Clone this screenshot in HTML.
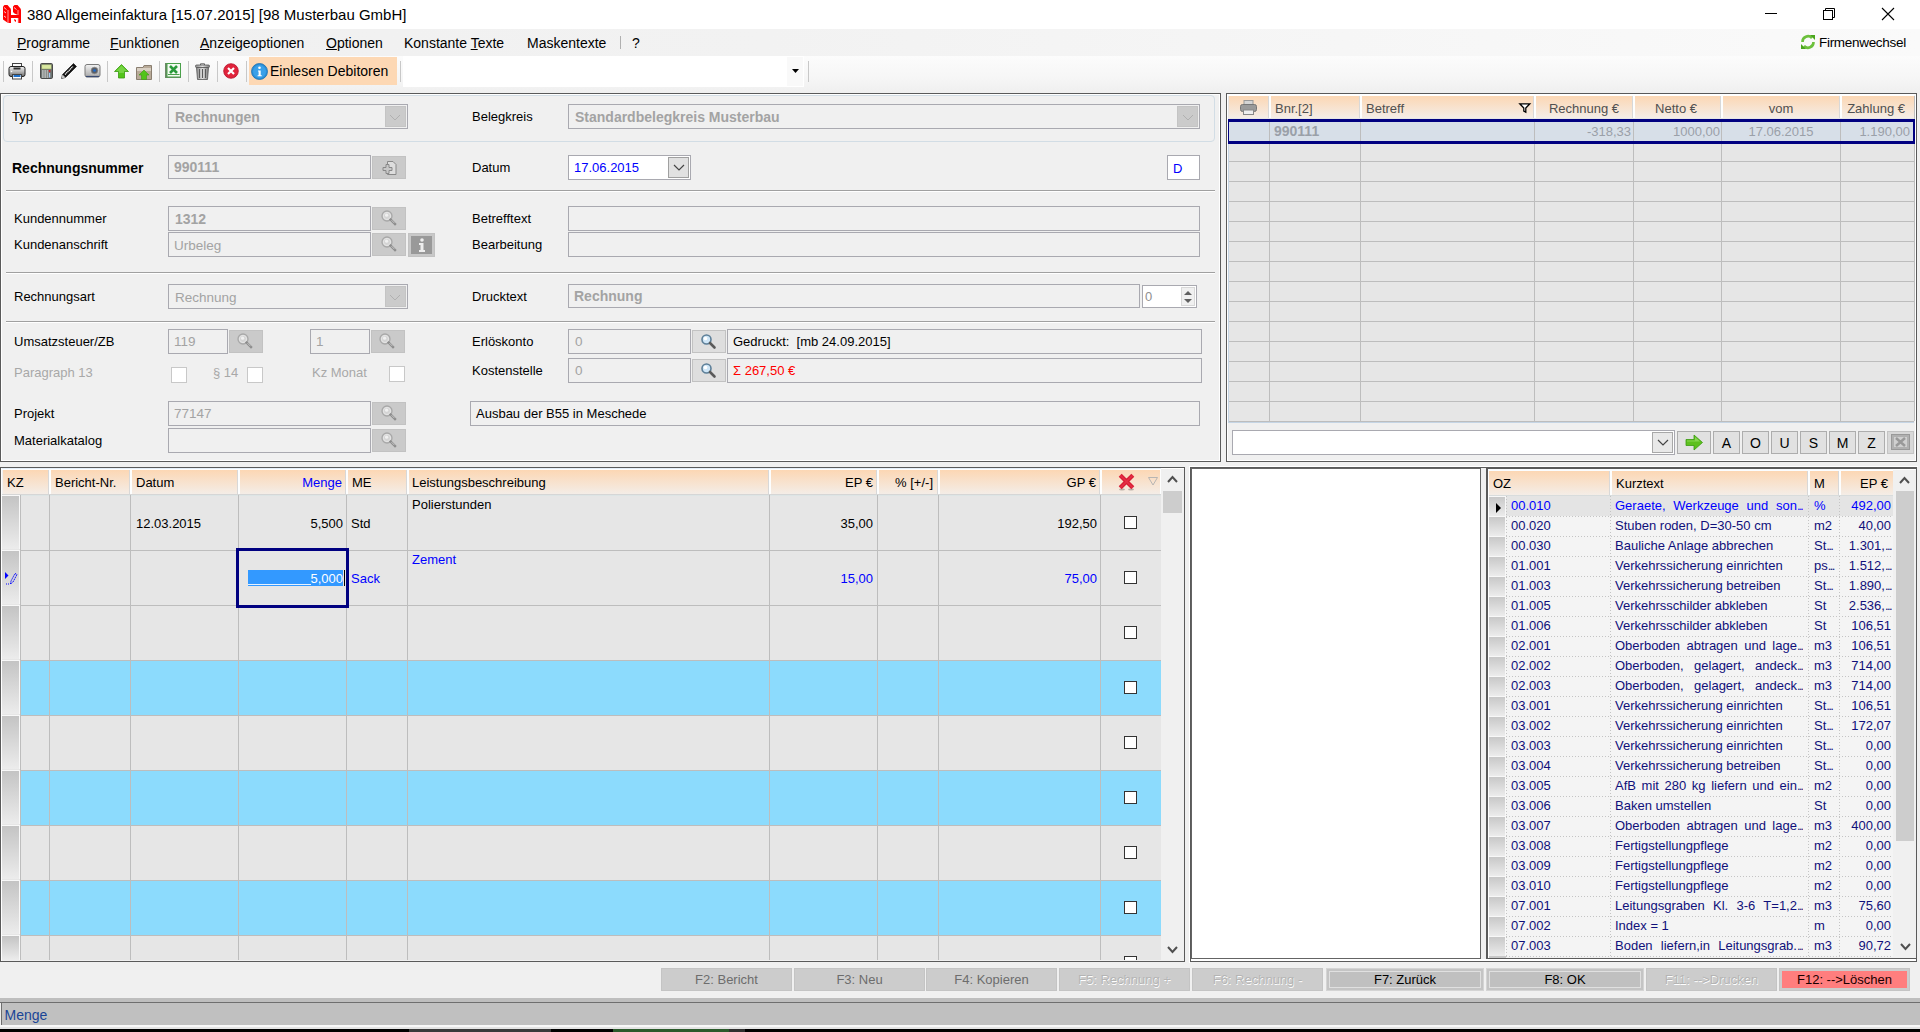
<!DOCTYPE html>
<html><head><meta charset="utf-8"><title>Allgemeinfaktura</title>
<style>
html,body{margin:0;padding:0;}
body{width:1920px;height:1032px;overflow:hidden;position:relative;background:#f0f0f0;font-family:"Liberation Sans", sans-serif;}
.a{position:absolute;}
.t{white-space:pre;}
svg{overflow:visible}
</style></head><body>
<div class="a" style="left:0px;top:0px;width:1920px;height:29px;background:#fff"></div>
<svg class="a" style="left:0px;top:0px;" width="24" height="24" viewBox="0 0 24 24"><path d="M3 6.5 L4.5 5 L7.5 5 L10.5 8.5 L11 10 L11 23 L8 23 L3 19.5 Z" fill="#ff0000"/><path d="M13 6.5 L14.5 5 L17.5 5 L20.5 8.5 L21 10 L21 23 L18 23 L18 15 L14.5 13.5 L13 12 Z" fill="#ff0000"/><rect x="11" y="15" width="7" height="3" fill="#ff0000"/><path d="M14 19 L16 20 L16 22 L14.5 21 Z" fill="#ff0000"/><path d="M4 7.5 L6.5 9.5 M4 11.5 L6 13 M4 16 L6 17.5 M14 7.5 L16.5 9.5" stroke="#ffd8d8" stroke-width="0.9"/><path d="M8 10 V23 M18 10 V15 M18 18 V23" stroke="#ffc0c0" stroke-width="0.8"/></svg>
<div class="a t" style="left:27px;top:6.0px;font-size:15px;line-height:18px;color:#000;font-weight:400;">380 Allgemeinfaktura [15.07.2015] [98 Musterbau GmbH]</div>
<div class="a" style="left:1765px;top:13px;width:12px;height:1px;background:#000"></div>
<svg class="a" style="left:1822px;top:7px;" width="14" height="14" viewBox="0 0 14 14"><rect x="1.5" y="3.5" width="9" height="9" fill="none" stroke="#000"/><path d="M3.5 3.5 V1.5 H12.5 V10.5 H10.5" fill="none" stroke="#000"/></svg>
<svg class="a" style="left:1881px;top:7px;" width="14" height="14" viewBox="0 0 14 14"><path d="M1 1 L13 13 M13 1 L1 13" stroke="#000" stroke-width="1.1"/></svg>
<div class="a" style="left:0px;top:29px;width:1920px;height:27px;background:linear-gradient(to right,#f0f0f0 0%,#f2f2f2 40%,#fafafa 100%)"></div>
<div class="a t" style="left:17px;top:34.5px;font-size:14px;line-height:17px;color:#000;font-weight:400;"><u>P</u>rogramme</div>
<div class="a t" style="left:110px;top:34.5px;font-size:14px;line-height:17px;color:#000;font-weight:400;"><u>F</u>unktionen</div>
<div class="a t" style="left:200px;top:34.5px;font-size:14px;line-height:17px;color:#000;font-weight:400;"><u>A</u>nzeigeoptionen</div>
<div class="a t" style="left:326px;top:34.5px;font-size:14px;line-height:17px;color:#000;font-weight:400;"><u>O</u>ptionen</div>
<div class="a t" style="left:404px;top:34.5px;font-size:14px;line-height:17px;color:#000;font-weight:400;">Konstante <u>T</u>exte</div>
<div class="a t" style="left:527px;top:34.5px;font-size:14px;line-height:17px;color:#000;font-weight:400;">Maskentexte</div>
<div class="a" style="left:620px;top:36px;width:1px;height:13px;background:#b0b0b0"></div>
<div class="a t" style="left:632px;top:34.5px;font-size:14px;line-height:17px;color:#000;font-weight:400;">?</div>
<svg class="a" style="left:1800px;top:34px;" width="16" height="16" viewBox="0 0 16 16"><path d="M2.5 8 A5.5 5.5 0 0 1 12 4" fill="none" stroke="#6cc03c" stroke-width="2.6"/><path d="M10 1 L15 1 L15 6 Z" fill="#4aa51c"/><path d="M13.5 8 A5.5 5.5 0 0 1 4 12" fill="none" stroke="#6cc03c" stroke-width="2.6"/><path d="M6 15 L1 15 L1 10 Z" fill="#4aa51c"/></svg>
<div class="a t" style="left:1819px;top:35.0px;font-size:13.5px;line-height:16.5px;color:#000;font-weight:400;letter-spacing:-0.3px">Firmenwechsel</div>
<div class="a" style="left:0px;top:56px;width:1920px;height:37px;background:linear-gradient(to bottom,#fcfcfc 0%,#f6f6f6 60%,#efefef 100%)"></div>
<div class="a" style="left:3px;top:61px;width:1px;height:21px;background:#c8c8c8"></div>
<div class="a" style="left:32px;top:61px;width:1px;height:21px;background:#c8c8c8"></div>
<div class="a" style="left:107px;top:61px;width:1px;height:21px;background:#c8c8c8"></div>
<div class="a" style="left:159px;top:61px;width:1px;height:21px;background:#c8c8c8"></div>
<div class="a" style="left:188px;top:61px;width:1px;height:21px;background:#c8c8c8"></div>
<div class="a" style="left:217px;top:61px;width:1px;height:21px;background:#c8c8c8"></div>
<div class="a" style="left:246px;top:61px;width:1px;height:21px;background:#c8c8c8"></div>
<div class="a" style="left:400px;top:61px;width:1px;height:21px;background:#c8c8c8"></div>
<div class="a" style="left:808px;top:61px;width:1px;height:21px;background:#c8c8c8"></div>
<svg class="a" style="left:8px;top:62px;" width="18" height="18" viewBox="0 0 18 18"><defs><linearGradient id="pg" x1="0" y1="0" x2="0" y2="1"><stop offset="0" stop-color="#f2f2f2"/><stop offset="0.5" stop-color="#b8b8b8"/><stop offset="1" stop-color="#6a6a6a"/></linearGradient></defs><rect x="4.5" y="1.5" width="9" height="5" fill="#fafafa" stroke="#444"/><rect x="1" y="4.5" width="16" height="10" rx="2" fill="url(#pg)" stroke="#222" stroke-width="1"/><rect x="5.5" y="5.5" width="7" height="2" fill="#333"/><circle cx="3.5" cy="9.5" r="0.8" fill="#fff"/><rect x="4.5" y="12.5" width="9" height="4.5" fill="#fff" stroke="#444"/><rect x="5.5" y="13" width="7" height="2" fill="#1e6fc8"/></svg>
<svg class="a" style="left:40px;top:63px;" width="13" height="16" viewBox="0 0 13 16"><rect x="0.5" y="0.5" width="12" height="15" rx="1.2" fill="#6e7370" stroke="#4a4a4a"/><rect x="1.8" y="1.8" width="9.4" height="4.2" fill="#d9e8a0" stroke="#8a9a60" stroke-width="0.5"/><rect x="2" y="7.5" width="1.7" height="1" fill="#f4f4f4"/><rect x="4.3" y="7.5" width="1.7" height="1" fill="#f4f4f4"/><rect x="6.6" y="7.5" width="1.7" height="1" fill="#f4f4f4"/><rect x="2" y="9.5" width="1.7" height="1" fill="#f4f4f4"/><rect x="4.3" y="9.5" width="1.7" height="1" fill="#f4f4f4"/><rect x="6.6" y="9.5" width="1.7" height="1" fill="#f4f4f4"/><rect x="2" y="11.5" width="1.7" height="1" fill="#f4f4f4"/><rect x="4.3" y="11.5" width="1.7" height="1" fill="#f4f4f4"/><rect x="6.6" y="11.5" width="1.7" height="1" fill="#f4f4f4"/><rect x="2" y="13.5" width="1.7" height="1" fill="#f4f4f4"/><rect x="4.3" y="13.5" width="1.7" height="1" fill="#f4f4f4"/><rect x="6.6" y="13.5" width="1.7" height="1" fill="#f4f4f4"/><circle cx="9.6" cy="7.9" r="0.9" fill="#e81818"/><path d="M9.6 10 V14.5" stroke="#a8c8f0" stroke-width="1.2"/></svg>
<svg class="a" style="left:60px;top:62px;" width="18" height="18" viewBox="0 0 18 18"><path d="M1.5 16.5 L2.5 12.5 L13.5 1.5 L16.5 4.5 L5.5 15.5 Z" fill="#111" stroke="#111" stroke-width="0.6"/><path d="M1.5 16.5 L2.5 12.5 L5.5 15.5 Z" fill="#c8c8c8"/><path d="M5 12.5 L13 4.5" stroke="#fff" stroke-width="1.3" stroke-dasharray="1.2 0.6"/></svg>
<svg class="a" style="left:84px;top:64px;" width="17" height="14" viewBox="0 0 17 14"><defs><linearGradient id="cg" x1="0" y1="0" x2="0" y2="1"><stop offset="0" stop-color="#f4f4f4"/><stop offset="1" stop-color="#a8a8a8"/></linearGradient></defs><path d="M1 2.5 Q1 0.5 3 0.5 H14 Q16 0.5 16 2.5 V11 Q16 13 14 13 H3 Q1 13 1 11 Z" fill="url(#cg)" stroke="#7a7a7a"/><path d="M2 12.5 H15" stroke="#3a4a70" stroke-width="1.2"/><circle cx="10.5" cy="6.5" r="3.3" fill="#5a5e66" stroke="#888" stroke-width="0.6"/><circle cx="10.5" cy="6.5" r="1.3" fill="#1a6ad0"/></svg>
<svg class="a" style="left:114px;top:64px;" width="15" height="15" viewBox="0 0 15 15"><path d="M7.5 0.5 L14.5 7.5 L10.5 7.5 L10.5 14 L4.5 14 L4.5 7.5 L0.5 7.5 Z" fill="#52c41a" stroke="#3a9a10" stroke-width="0.8"/><path d="M7.5 1.5 L13 7 L10 7 L10 9 L5 9 L5 7 L2 7 Z" fill="#8fe060" opacity="0.6"/></svg>
<svg class="a" style="left:136px;top:64px;" width="17" height="16" viewBox="0 0 17 16"><path d="M0.5 3.5 H7 L8 1.5 H15.5 V15.5 H0.5 Z" fill="#b8aa98" stroke="#8a7e70"/><rect x="1" y="4" width="14" height="3" fill="#d8cfc2"/><path d="M8 6 L13 11 L10.5 11 L10.5 15.5 L5.5 15.5 L5.5 11 L3 11 Z" fill="#52c41a" stroke="#3a9a10" stroke-width="0.6"/></svg>
<svg class="a" style="left:165px;top:63px;" width="17" height="16" viewBox="0 0 17 16"><rect x="0" y="0" width="16" height="15" fill="#6a8a66"/><rect x="2" y="0.5" width="13.5" height="13.5" fill="#f4faf2" stroke="#4aa04a" stroke-width="1"/><path d="M5 3 L12 10 M12 3 L5 10" stroke="#2a9a3a" stroke-width="2.6"/><path d="M3 11.5 H14.5" stroke="#4aa04a" stroke-width="1"/></svg>
<svg class="a" style="left:195px;top:63px;" width="15" height="17" viewBox="0 0 15 17"><defs><linearGradient id="tg" x1="0" y1="0" x2="1" y2="0"><stop offset="0" stop-color="#8a8a8a"/><stop offset="0.5" stop-color="#e0e0e0"/><stop offset="1" stop-color="#7a7a7a"/></linearGradient></defs><rect x="0.5" y="2" width="14" height="2.5" rx="1" fill="url(#tg)" stroke="#555" stroke-width="0.8"/><path d="M5.5 2 V0.8 H9.5 V2" fill="none" stroke="#555" stroke-width="0.9"/><path d="M1.5 4.5 H13.5 L12.5 16.5 H2.5 Z" fill="url(#tg)" stroke="#555" stroke-width="0.8"/><path d="M4.5 6 V15 M7.5 6 V15 M10.5 6 V15" stroke="#5a5a5a" stroke-width="1"/></svg>
<svg class="a" style="left:223px;top:63px;" width="16" height="16" viewBox="0 0 16 16"><circle cx="8" cy="8" r="7.3" fill="#e0243c" stroke="#b8102a" stroke-width="0.8"/><path d="M5 5 L11 11 M11 5 L5 11" stroke="#fff" stroke-width="2.2"/></svg>
<div class="a" style="left:249px;top:57px;width:148px;height:28px;background:#fdd8b4"></div>
<svg class="a" style="left:251px;top:63px;" width="17" height="17" viewBox="0 0 17 17"><circle cx="8.5" cy="8.5" r="8" fill="#2a8fd8" stroke="#1a6fb0" stroke-width="0.8"/><circle cx="8.5" cy="8.5" r="6.5" fill="#3aa0e8"/><circle cx="8.5" cy="4.8" r="1.3" fill="#fff"/><path d="M7 7.5 H9.7 V12.3 H10.8 V13.3 H6.6 V12.3 H7.6 V8.5 H7 Z" fill="#fff"/></svg>
<div class="a t" style="left:270px;top:62.5px;font-size:14px;line-height:17px;color:#000;font-weight:400;">Einlesen Debitoren</div>
<div class="a" style="left:403px;top:56px;width:401px;height:31px;background:#fff"></div>
<div class="a" style="left:787px;top:57px;width:16px;height:29px;background:#f9f9f9"></div>
<svg class="a" style="left:792px;top:69px;" width="7" height="5" viewBox="0 0 7 5"><path d="M0 0 H7 L3.5 4 Z" fill="#000"/></svg>
<div class="a" style="left:0px;top:93px;width:1221px;height:369px;background:#f0f0f0;border-top:1px solid #5a5a5a;border-left:1px solid #5a5a5a;border-right:1px solid #5a5a5a;border-bottom:1px solid #5a5a5a;box-sizing:border-box;box-shadow:inset 1px 1px 0 #fff, inset -1px -1px 0 #fff"></div>
<div class="a" style="left:3px;top:95px;width:1212px;height:47px;border:1px solid #d2dde5;border-radius:4px;box-sizing:border-box"></div>
<div class="a t" style="left:12px;top:108.5px;font-size:13px;line-height:16px;color:#000;font-weight:400;">Typ</div>
<div class="a" style="left:168px;top:104px;width:240px;height:25px;background:#f0f0f0;border:1px solid #a9a9b0;box-sizing:border-box"></div>
<div class="a" style="left:385px;top:106px;width:21px;height:21px;background:#cbcbcb;border:1px solid #c4c4c4;box-sizing:border-box"></div>
<svg class="a" style="left:389px;top:114px;" width="12" height="7" viewBox="0 0 12 7"><path d="M1 1 L6.0 6 L11 1" fill="none" stroke="#b0b0b0" stroke-width="1"/></svg>
<div class="a t" style="left:175px;top:108.5px;font-size:14px;line-height:17px;color:#a3a3a3;font-weight:700;">Rechnungen</div>
<div class="a t" style="left:472px;top:108.5px;font-size:13px;line-height:16px;color:#000;font-weight:400;">Belegkreis</div>
<div class="a" style="left:568px;top:104px;width:632px;height:25px;background:#f0f0f0;border:1px solid #a9a9b0;box-sizing:border-box"></div>
<div class="a" style="left:1177px;top:106px;width:21px;height:21px;background:#cbcbcb;border:1px solid #c4c4c4;box-sizing:border-box"></div>
<svg class="a" style="left:1181.5px;top:114px;" width="12" height="7" viewBox="0 0 12 7"><path d="M1 1 L6.0 6 L11 1" fill="none" stroke="#b0b0b0" stroke-width="1"/></svg>
<div class="a t" style="left:575px;top:108.5px;font-size:14px;line-height:17px;color:#a3a3a3;font-weight:700;">Standardbelegkreis Musterbau</div>
<div class="a t" style="left:12px;top:159.5px;font-size:14px;line-height:17px;color:#000;font-weight:700;">Rechnungsnummer</div>
<div class="a" style="left:168px;top:155px;width:203px;height:24px;background:#f0f0f0;border:1px solid #a9a9b0;box-sizing:border-box"></div>
<div class="a t" style="left:174px;top:158.5px;font-size:14px;line-height:17px;color:#a3a3a3;font-weight:700;">990111</div>
<div class="a" style="left:372px;top:156px;width:34px;height:23px;background:#cacaca;border:1px solid #c2c2c2;box-sizing:border-box"></div>
<svg class="a" style="left:381px;top:159px;" width="17" height="17" viewBox="0 0 17 17"><path d="M6.5 2.5 H12 L15 5.5 V15.5 H6.5 Z" fill="#ddd" stroke="#888"/><path d="M2 8.5 H5 V5.5 H8 V8.5 H11 V11.5 H8 V14.5 H5 V11.5 H2 Z" fill="#c8c8c8" stroke="#888"/></svg>
<div class="a t" style="left:472px;top:159.5px;font-size:13px;line-height:16px;color:#000;font-weight:400;">Datum</div>
<div class="a" style="left:568px;top:155px;width:123px;height:25px;background:#fff;border:1px solid #a9a9b0;box-sizing:border-box"></div>
<div class="a" style="left:668px;top:157px;width:21px;height:21px;background:#e1e1e1;border:1px solid #a0a0a0;box-sizing:border-box"></div>
<svg class="a" style="left:673px;top:164px;" width="12" height="7" viewBox="0 0 12 7"><path d="M1 1 L6.0 6 L11 1" fill="none" stroke="#444" stroke-width="1.2"/></svg>
<div class="a t" style="left:574px;top:159.5px;font-size:13px;line-height:16px;color:#0000ff;font-weight:400;">17.06.2015</div>
<div class="a" style="left:1167px;top:155px;width:33px;height:25px;background:#fff;border:1px solid #a9a9b0;box-sizing:border-box"></div>
<div class="a t" style="left:1173px;top:160.5px;font-size:13px;line-height:16px;color:#0000ff;font-weight:400;">D</div>
<div class="a" style="left:6px;top:190px;width:1209px;height:1px;background:#a0a0a0"></div>
<div class="a" style="left:6px;top:191px;width:1209px;height:1px;background:#ffffff"></div>
<div class="a t" style="left:14px;top:210.5px;font-size:13px;line-height:16px;color:#000;font-weight:400;">Kundennummer</div>
<div class="a t" style="left:14px;top:236.5px;font-size:13px;line-height:16px;color:#000;font-weight:400;">Kundenanschrift</div>
<div class="a" style="left:168px;top:206px;width:203px;height:25px;background:#f0f0f0;border:1px solid #a9a9b0;box-sizing:border-box"></div>
<div class="a" style="left:168px;top:232px;width:203px;height:25px;background:#f0f0f0;border:1px solid #a9a9b0;box-sizing:border-box"></div>
<div class="a t" style="left:175px;top:210.5px;font-size:14px;line-height:17px;color:#a3a3a3;font-weight:700;">1312</div>
<div class="a t" style="left:174px;top:237.5px;font-size:13.5px;line-height:16.5px;color:#a3a3a3;font-weight:400;">Urbeleg</div>
<div class="a" style="left:372px;top:207px;width:34px;height:23px;background:#cacaca;border:1px solid #c2c2c2;box-sizing:border-box"></div>
<div class="a" style="left:372px;top:233px;width:34px;height:23px;background:#cacaca;border:1px solid #c2c2c2;box-sizing:border-box"></div>
<svg class="a" style="left:381px;top:210px;" width="16" height="16" viewBox="0 0 16 16"><circle cx="6" cy="6" r="5" fill="#d4d4d4" stroke="#a8a8a8" stroke-width="1.3"/><circle cx="6" cy="6" r="3.6" fill="none" stroke="#e8e8e8" stroke-width="0.8"/><circle cx="5.6" cy="5.2" r="1.6" fill="#f0f0f0"/><path d="M9.6 9.6 L14 14" stroke="#8c8c8c" stroke-width="2.4" stroke-linecap="square"/><path d="M10.5 10.2 L13.5 13.2" stroke="#e0e0e0" stroke-width="0.7"/></svg>
<svg class="a" style="left:381px;top:236px;" width="16" height="16" viewBox="0 0 16 16"><circle cx="6" cy="6" r="5" fill="#d4d4d4" stroke="#a8a8a8" stroke-width="1.3"/><circle cx="6" cy="6" r="3.6" fill="none" stroke="#e8e8e8" stroke-width="0.8"/><circle cx="5.6" cy="5.2" r="1.6" fill="#f0f0f0"/><path d="M9.6 9.6 L14 14" stroke="#8c8c8c" stroke-width="2.4" stroke-linecap="square"/><path d="M10.5 10.2 L13.5 13.2" stroke="#e0e0e0" stroke-width="0.7"/></svg>
<div class="a" style="left:408px;top:233px;width:27px;height:24px;background:#c8c8c8;border:1px solid #c2c2c2;box-sizing:border-box"></div>
<svg class="a" style="left:411px;top:236px;" width="21" height="18" viewBox="0 0 21 18"><rect x="0" y="0" width="21" height="18" fill="#999"/><circle cx="11" cy="4" r="1.8" fill="#eee"/><path d="M8 7 H12.5 V14 H14 V16 H8 V14 H9.5 V9 H8 Z" fill="#eee"/></svg>
<div class="a t" style="left:472px;top:210.5px;font-size:13px;line-height:16px;color:#000;font-weight:400;">Betrefftext</div>
<div class="a t" style="left:472px;top:236.5px;font-size:13px;line-height:16px;color:#000;font-weight:400;">Bearbeitung</div>
<div class="a" style="left:568px;top:206px;width:632px;height:25px;background:#f0f0f0;border:1px solid #a9a9b0;box-sizing:border-box"></div>
<div class="a" style="left:568px;top:232px;width:632px;height:25px;background:#f0f0f0;border:1px solid #a9a9b0;box-sizing:border-box"></div>
<div class="a" style="left:6px;top:272px;width:1209px;height:1px;background:#a0a0a0"></div>
<div class="a" style="left:6px;top:273px;width:1209px;height:1px;background:#ffffff"></div>
<div class="a t" style="left:14px;top:288.5px;font-size:13px;line-height:16px;color:#000;font-weight:400;">Rechnungsart</div>
<div class="a" style="left:168px;top:284px;width:240px;height:25px;background:#f0f0f0;border:1px solid #a9a9b0;box-sizing:border-box"></div>
<div class="a" style="left:385px;top:286px;width:21px;height:21px;background:#cbcbcb;border:1px solid #c4c4c4;box-sizing:border-box"></div>
<svg class="a" style="left:389px;top:294px;" width="12" height="7" viewBox="0 0 12 7"><path d="M1 1 L6.0 6 L11 1" fill="none" stroke="#b0b0b0" stroke-width="1"/></svg>
<div class="a t" style="left:175px;top:290.0px;font-size:13.5px;line-height:16.5px;color:#a3a3a3;font-weight:400;">Rechnung</div>
<div class="a t" style="left:472px;top:288.5px;font-size:13px;line-height:16px;color:#000;font-weight:400;">Drucktext</div>
<div class="a" style="left:568px;top:284px;width:572px;height:24px;background:#f0f0f0;border:1px solid #a9a9b0;box-sizing:border-box"></div>
<div class="a t" style="left:574px;top:287.5px;font-size:14px;line-height:17px;color:#a3a3a3;font-weight:700;">Rechnung</div>
<div class="a" style="left:1142px;top:285px;width:55px;height:23px;background:#fff;border:1px solid #a9a9b0;box-sizing:border-box"></div>
<div class="a t" style="left:1145px;top:288.5px;font-size:13px;line-height:16px;color:#909090;font-weight:400;">0</div>
<div class="a" style="left:1181px;top:287px;width:14px;height:19px;background:#f0f0f0;border:1px solid #d8d8d8;box-sizing:border-box"></div>
<svg class="a" style="left:1183px;top:289px;" width="10" height="16" viewBox="0 0 10 16"><path d="M1 6 L5 2 L9 6 Z" fill="#606060"/><path d="M1 10 L5 14 L9 10 Z" fill="#606060"/></svg>
<div class="a" style="left:6px;top:321px;width:1209px;height:1px;background:#a0a0a0"></div>
<div class="a" style="left:6px;top:322px;width:1209px;height:1px;background:#ffffff"></div>
<div class="a t" style="left:14px;top:333.5px;font-size:13px;line-height:16px;color:#000;font-weight:400;">Umsatzsteuer/ZB</div>
<div class="a" style="left:168px;top:329px;width:60px;height:25px;background:#f0f0f0;border:1px solid #a9a9b0;box-sizing:border-box"></div>
<div class="a t" style="left:174px;top:334.0px;font-size:13.5px;line-height:16.5px;color:#a3a3a3;font-weight:400;">119</div>
<div class="a" style="left:229px;top:330px;width:34px;height:23px;background:#cacaca;border:1px solid #c2c2c2;box-sizing:border-box"></div>
<svg class="a" style="left:237px;top:333px;" width="16" height="16" viewBox="0 0 16 16"><circle cx="6" cy="6" r="5" fill="#d4d4d4" stroke="#a8a8a8" stroke-width="1.3"/><circle cx="6" cy="6" r="3.6" fill="none" stroke="#e8e8e8" stroke-width="0.8"/><circle cx="5.6" cy="5.2" r="1.6" fill="#f0f0f0"/><path d="M9.6 9.6 L14 14" stroke="#8c8c8c" stroke-width="2.4" stroke-linecap="square"/><path d="M10.5 10.2 L13.5 13.2" stroke="#e0e0e0" stroke-width="0.7"/></svg>
<div class="a" style="left:310px;top:329px;width:60px;height:25px;background:#f0f0f0;border:1px solid #a9a9b0;box-sizing:border-box"></div>
<div class="a t" style="left:316px;top:334.0px;font-size:13.5px;line-height:16.5px;color:#a3a3a3;font-weight:400;">1</div>
<div class="a" style="left:371px;top:330px;width:34px;height:23px;background:#cacaca;border:1px solid #c2c2c2;box-sizing:border-box"></div>
<svg class="a" style="left:379px;top:333px;" width="16" height="16" viewBox="0 0 16 16"><circle cx="6" cy="6" r="5" fill="#d4d4d4" stroke="#a8a8a8" stroke-width="1.3"/><circle cx="6" cy="6" r="3.6" fill="none" stroke="#e8e8e8" stroke-width="0.8"/><circle cx="5.6" cy="5.2" r="1.6" fill="#f0f0f0"/><path d="M9.6 9.6 L14 14" stroke="#8c8c8c" stroke-width="2.4" stroke-linecap="square"/><path d="M10.5 10.2 L13.5 13.2" stroke="#e0e0e0" stroke-width="0.7"/></svg>
<div class="a t" style="left:14px;top:364.5px;font-size:13px;line-height:16px;color:#a8a8a8;font-weight:400;">Paragraph 13</div>
<div class="a" style="left:171px;top:367px;width:16px;height:16px;background:#fff;border:1px solid #c8c8c8;box-sizing:border-box"></div>
<div class="a t" style="left:213px;top:364.5px;font-size:13px;line-height:16px;color:#a8a8a8;font-weight:400;">§ 14</div>
<div class="a" style="left:247px;top:367px;width:16px;height:16px;background:#fff;border:1px solid #c8c8c8;box-sizing:border-box"></div>
<div class="a t" style="left:312px;top:364.5px;font-size:13px;line-height:16px;color:#a8a8a8;font-weight:400;">Kz Monat</div>
<div class="a" style="left:389px;top:366px;width:16px;height:16px;background:#fff;border:1px solid #c8c8c8;box-sizing:border-box"></div>
<div class="a t" style="left:472px;top:333.5px;font-size:13px;line-height:16px;color:#000;font-weight:400;">Erlöskonto</div>
<div class="a t" style="left:472px;top:362.5px;font-size:13px;line-height:16px;color:#000;font-weight:400;">Kostenstelle</div>
<div class="a" style="left:568px;top:329px;width:123px;height:25px;background:#f0f0f0;border:1px solid #a9a9b0;box-sizing:border-box"></div>
<div class="a" style="left:568px;top:358px;width:123px;height:25px;background:#f0f0f0;border:1px solid #a9a9b0;box-sizing:border-box"></div>
<div class="a t" style="left:575px;top:334.0px;font-size:13.5px;line-height:16.5px;color:#a3a3a3;font-weight:400;">0</div>
<div class="a t" style="left:575px;top:363.0px;font-size:13.5px;line-height:16.5px;color:#a3a3a3;font-weight:400;">0</div>
<div class="a" style="left:692px;top:330px;width:34px;height:23px;background:#dedede;border:1px solid #c2c2c2;box-sizing:border-box"></div>
<div class="a" style="left:692px;top:359px;width:34px;height:23px;background:#dedede;border:1px solid #c2c2c2;box-sizing:border-box"></div>
<svg class="a" style="left:700px;top:333px;" width="16" height="16" viewBox="0 0 16 16"><circle cx="6.5" cy="6.5" r="4.5" fill="#cfe6f7" stroke="#5d7f98" stroke-width="1.6"/><circle cx="5.5" cy="5.5" r="1.8" fill="#ffffff"/><path d="M10 10 L14.5 14.5" stroke="#5a5a5a" stroke-width="2.6" stroke-linecap="round"/></svg>
<svg class="a" style="left:700px;top:362px;" width="16" height="16" viewBox="0 0 16 16"><circle cx="6.5" cy="6.5" r="4.5" fill="#cfe6f7" stroke="#5d7f98" stroke-width="1.6"/><circle cx="5.5" cy="5.5" r="1.8" fill="#ffffff"/><path d="M10 10 L14.5 14.5" stroke="#5a5a5a" stroke-width="2.6" stroke-linecap="round"/></svg>
<div class="a" style="left:727px;top:329px;width:475px;height:25px;background:#f0f0f0;border:1px solid #a9a9b0;box-sizing:border-box"></div>
<div class="a" style="left:727px;top:358px;width:475px;height:25px;background:#f0f0f0;border:1px solid #a9a9b0;box-sizing:border-box"></div>
<div class="a t" style="left:733px;top:333.5px;font-size:13px;line-height:16px;color:#000;font-weight:400;">Gedruckt:&nbsp; [mb 24.09.2015]</div>
<div class="a t" style="left:733px;top:362.5px;font-size:13px;line-height:16px;color:#ff0000;font-weight:400;">Σ 267,50 €</div>
<div class="a t" style="left:14px;top:405.5px;font-size:13px;line-height:16px;color:#000;font-weight:400;">Projekt</div>
<div class="a t" style="left:14px;top:432.5px;font-size:13px;line-height:16px;color:#000;font-weight:400;">Materialkatalog</div>
<div class="a" style="left:168px;top:401px;width:203px;height:25px;background:#f0f0f0;border:1px solid #a9a9b0;box-sizing:border-box"></div>
<div class="a" style="left:168px;top:428px;width:203px;height:25px;background:#f0f0f0;border:1px solid #a9a9b0;box-sizing:border-box"></div>
<div class="a t" style="left:174px;top:406.0px;font-size:13.5px;line-height:16.5px;color:#a3a3a3;font-weight:400;">77147</div>
<div class="a" style="left:372px;top:402px;width:34px;height:23px;background:#cacaca;border:1px solid #c2c2c2;box-sizing:border-box"></div>
<div class="a" style="left:372px;top:429px;width:34px;height:23px;background:#cacaca;border:1px solid #c2c2c2;box-sizing:border-box"></div>
<svg class="a" style="left:381px;top:405px;" width="16" height="16" viewBox="0 0 16 16"><circle cx="6" cy="6" r="5" fill="#d4d4d4" stroke="#a8a8a8" stroke-width="1.3"/><circle cx="6" cy="6" r="3.6" fill="none" stroke="#e8e8e8" stroke-width="0.8"/><circle cx="5.6" cy="5.2" r="1.6" fill="#f0f0f0"/><path d="M9.6 9.6 L14 14" stroke="#8c8c8c" stroke-width="2.4" stroke-linecap="square"/><path d="M10.5 10.2 L13.5 13.2" stroke="#e0e0e0" stroke-width="0.7"/></svg>
<svg class="a" style="left:381px;top:432px;" width="16" height="16" viewBox="0 0 16 16"><circle cx="6" cy="6" r="5" fill="#d4d4d4" stroke="#a8a8a8" stroke-width="1.3"/><circle cx="6" cy="6" r="3.6" fill="none" stroke="#e8e8e8" stroke-width="0.8"/><circle cx="5.6" cy="5.2" r="1.6" fill="#f0f0f0"/><path d="M9.6 9.6 L14 14" stroke="#8c8c8c" stroke-width="2.4" stroke-linecap="square"/><path d="M10.5 10.2 L13.5 13.2" stroke="#e0e0e0" stroke-width="0.7"/></svg>
<div class="a" style="left:470px;top:401px;width:730px;height:25px;background:#f0f0f0;border:1px solid #a9a9b0;box-sizing:border-box"></div>
<div class="a t" style="left:476px;top:405.5px;font-size:13px;line-height:16px;color:#000;font-weight:400;">Ausbau der B55 in Meschede</div>
<div class="a" style="left:1226px;top:93px;width:691px;height:369px;background:#f0f0f0;border:1px solid #5a5a5a;box-sizing:border-box;box-shadow:inset 1px 1px 0 #fff, inset -1px -1px 0 #fff"></div>
<div class="a" style="left:1228px;top:95px;width:686px;height:327px;background:#e6e6e6"></div>
<div class="a" style="left:1228px;top:95px;width:686px;height:1px;background:#fff"></div>
<div class="a" style="left:1229px;top:96px;width:39px;height:22px;background:linear-gradient(to bottom,#fcd7b4,#f4ede7)"></div>
<div class="a" style="left:1268px;top:96px;width:1px;height:22px;background:#d8d8d8"></div>
<div class="a" style="left:1269px;top:96px;width:2px;height:22px;background:#fdfefe"></div>
<div class="a" style="left:1271px;top:96px;width:88px;height:22px;background:linear-gradient(to bottom,#fcd7b4,#f4ede7)"></div>
<div class="a" style="left:1359px;top:96px;width:1px;height:22px;background:#d8d8d8"></div>
<div class="a" style="left:1360px;top:96px;width:2px;height:22px;background:#fdfefe"></div>
<div class="a" style="left:1362px;top:96px;width:171px;height:22px;background:linear-gradient(to bottom,#fcd7b4,#f4ede7)"></div>
<div class="a" style="left:1533px;top:96px;width:1px;height:22px;background:#d8d8d8"></div>
<div class="a" style="left:1534px;top:96px;width:2px;height:22px;background:#fdfefe"></div>
<div class="a" style="left:1536px;top:96px;width:96px;height:22px;background:linear-gradient(to bottom,#fcd7b4,#f4ede7)"></div>
<div class="a" style="left:1632px;top:96px;width:1px;height:22px;background:#d8d8d8"></div>
<div class="a" style="left:1633px;top:96px;width:2px;height:22px;background:#fdfefe"></div>
<div class="a" style="left:1635px;top:96px;width:85px;height:22px;background:linear-gradient(to bottom,#fcd7b4,#f4ede7)"></div>
<div class="a" style="left:1720px;top:96px;width:1px;height:22px;background:#d8d8d8"></div>
<div class="a" style="left:1721px;top:96px;width:2px;height:22px;background:#fdfefe"></div>
<div class="a" style="left:1723px;top:96px;width:116px;height:22px;background:linear-gradient(to bottom,#fcd7b4,#f4ede7)"></div>
<div class="a" style="left:1839px;top:96px;width:1px;height:22px;background:#d8d8d8"></div>
<div class="a" style="left:1840px;top:96px;width:2px;height:22px;background:#fdfefe"></div>
<div class="a" style="left:1842px;top:96px;width:72px;height:22px;background:linear-gradient(to bottom,#fcd7b4,#f4ede7)"></div>
<div class="a" style="left:1228px;top:141px;width:686px;height:1px;background:#bdbdbd"></div>
<div class="a" style="left:1228px;top:161px;width:686px;height:1px;background:#bdbdbd"></div>
<div class="a" style="left:1228px;top:181px;width:686px;height:1px;background:#bdbdbd"></div>
<div class="a" style="left:1228px;top:201px;width:686px;height:1px;background:#bdbdbd"></div>
<div class="a" style="left:1228px;top:221px;width:686px;height:1px;background:#bdbdbd"></div>
<div class="a" style="left:1228px;top:241px;width:686px;height:1px;background:#bdbdbd"></div>
<div class="a" style="left:1228px;top:261px;width:686px;height:1px;background:#bdbdbd"></div>
<div class="a" style="left:1228px;top:281px;width:686px;height:1px;background:#bdbdbd"></div>
<div class="a" style="left:1228px;top:301px;width:686px;height:1px;background:#bdbdbd"></div>
<div class="a" style="left:1228px;top:321px;width:686px;height:1px;background:#bdbdbd"></div>
<div class="a" style="left:1228px;top:341px;width:686px;height:1px;background:#bdbdbd"></div>
<div class="a" style="left:1228px;top:361px;width:686px;height:1px;background:#bdbdbd"></div>
<div class="a" style="left:1228px;top:381px;width:686px;height:1px;background:#bdbdbd"></div>
<div class="a" style="left:1228px;top:401px;width:686px;height:1px;background:#bdbdbd"></div>
<div class="a" style="left:1228px;top:421px;width:686px;height:1px;background:#bdbdbd"></div>
<div class="a" style="left:1228px;top:422px;width:686px;height:1px;background:#c5d5e5"></div>
<div class="a" style="left:1228px;top:144px;width:1px;height:278px;background:#c5d5e5"></div>
<div class="a" style="left:1269px;top:119px;width:1px;height:302px;background:#bdbdbd"></div>
<div class="a" style="left:1360px;top:119px;width:1px;height:302px;background:#bdbdbd"></div>
<div class="a" style="left:1534px;top:119px;width:1px;height:302px;background:#bdbdbd"></div>
<div class="a" style="left:1633px;top:119px;width:1px;height:302px;background:#bdbdbd"></div>
<div class="a" style="left:1721px;top:119px;width:1px;height:302px;background:#bdbdbd"></div>
<div class="a" style="left:1840px;top:119px;width:1px;height:302px;background:#bdbdbd"></div>
<div class="a" style="left:1914px;top:96px;width:1px;height:325px;background:#bdbdbd"></div>
<div class="a" style="left:1228px;top:119px;width:687px;height:25px;background:#d7dfe8;border:3px solid #000080;border-left-width:1.5px;border-right-width:2px;box-sizing:border-box"></div>
<div class="a" style="left:1269px;top:122px;width:1px;height:19px;background:#bdbdbd"></div>
<div class="a" style="left:1360px;top:122px;width:1px;height:19px;background:#bdbdbd"></div>
<div class="a" style="left:1534px;top:122px;width:1px;height:19px;background:#bdbdbd"></div>
<div class="a" style="left:1633px;top:122px;width:1px;height:19px;background:#bdbdbd"></div>
<div class="a" style="left:1721px;top:122px;width:1px;height:19px;background:#bdbdbd"></div>
<div class="a" style="left:1840px;top:122px;width:1px;height:19px;background:#bdbdbd"></div>
<svg class="a" style="left:1240px;top:100px;" width="17" height="15" viewBox="0 0 17 15"><rect x="4" y="0.5" width="9" height="4" fill="#d4d4d4" stroke="#999"/><rect x="0.5" y="4.5" width="16" height="7" rx="2" fill="#9a9a9a" stroke="#777"/><rect x="3.5" y="10" width="10" height="4.5" fill="#eee" stroke="#888"/></svg>
<div class="a t" style="left:1275px;top:100.5px;font-size:13px;line-height:16px;color:#505050;font-weight:400;">Bnr.[2]</div>
<div class="a t" style="left:1366px;top:100.5px;font-size:13px;line-height:16px;color:#505050;font-weight:400;">Betreff</div>
<svg class="a" style="left:1519px;top:103px;" width="12" height="10" viewBox="0 0 12 10"><path d="M0.8 0.8 H10.8 L6.8 5 V9.2 L4.8 8.2 V5 Z" fill="#fff" stroke="#000" stroke-width="1.3" stroke-linejoin="miter"/></svg>
<div class="a t" style="left:1529px;top:100.5px;width:90px;text-align:right;font-size:13px;line-height:16px;color:#505050;font-weight:400;">Rechnung €</div>
<div class="a t" style="left:1617px;top:100.5px;width:80px;text-align:right;font-size:13px;line-height:16px;color:#505050;font-weight:400;">Netto €</div>
<div class="a t" style="left:1741.0px;top:100.5px;width:80px;text-align:center;font-size:13px;line-height:16px;color:#505050;font-weight:400;">vom</div>
<div class="a t" style="left:1825px;top:100.5px;width:80px;text-align:right;font-size:13px;line-height:16px;color:#505050;font-weight:400;">Zahlung €</div>
<div class="a t" style="left:1274px;top:122.5px;font-size:14px;line-height:17px;color:#9aa0a8;font-weight:700;">990111</div>
<div class="a t" style="left:1551px;top:123.5px;width:80px;text-align:right;font-size:13px;line-height:16px;color:#9aa0a8;font-weight:400;">-318,33</div>
<div class="a t" style="left:1640px;top:123.5px;width:80px;text-align:right;font-size:13px;line-height:16px;color:#9aa0a8;font-weight:400;">1000,00</div>
<div class="a t" style="left:1736.0px;top:123.5px;width:90px;text-align:center;font-size:13px;line-height:16px;color:#9aa0a8;font-weight:400;">17.06.2015</div>
<div class="a t" style="left:1830px;top:123.5px;width:80px;text-align:right;font-size:13px;line-height:16px;color:#9aa0a8;font-weight:400;">1.190,00</div>
<div class="a" style="left:1232px;top:430px;width:443px;height:25px;background:#fff;border:1px solid #a9a9b0;box-sizing:border-box"></div>
<div class="a" style="left:1652px;top:432px;width:21px;height:21px;background:#e8e8e8;border:1px solid #a8a8a8;box-sizing:border-box"></div>
<svg class="a" style="left:1657px;top:439px;" width="12" height="7" viewBox="0 0 12 7"><path d="M1 1 L6.0 6 L11 1" fill="none" stroke="#444" stroke-width="1.2"/></svg>
<div class="a" style="left:1677px;top:431px;width:34px;height:23px;background:#e1e1e1;border:1px solid #adadad;box-sizing:border-box"></div>
<svg class="a" style="left:1685px;top:434px;" width="19" height="17" viewBox="0 0 19 17"><path d="M1 5.5 H9 V1 L17.5 8.5 L9 16 V11.5 H1 Z" fill="#5ec01e" stroke="#3a9a10" stroke-width="0.8"/><path d="M2 6.5 H10 V3 L15 7.5 H2 Z" fill="#9ae068" opacity="0.7"/></svg>
<div class="a" style="left:1713px;top:431px;width:27px;height:23px;background:#e1e1e1;border:1px solid #adadad;box-sizing:border-box"></div>
<div class="a t" style="left:1713.0px;top:434.5px;width:27px;text-align:center;font-size:14px;line-height:17px;color:#000;font-weight:400;">A</div>
<div class="a" style="left:1742px;top:431px;width:27px;height:23px;background:#e1e1e1;border:1px solid #adadad;box-sizing:border-box"></div>
<div class="a t" style="left:1742.0px;top:434.5px;width:27px;text-align:center;font-size:14px;line-height:17px;color:#000;font-weight:400;">O</div>
<div class="a" style="left:1771px;top:431px;width:27px;height:23px;background:#e1e1e1;border:1px solid #adadad;box-sizing:border-box"></div>
<div class="a t" style="left:1771.0px;top:434.5px;width:27px;text-align:center;font-size:14px;line-height:17px;color:#000;font-weight:400;">U</div>
<div class="a" style="left:1800px;top:431px;width:27px;height:23px;background:#e1e1e1;border:1px solid #adadad;box-sizing:border-box"></div>
<div class="a t" style="left:1800.0px;top:434.5px;width:27px;text-align:center;font-size:14px;line-height:17px;color:#000;font-weight:400;">S</div>
<div class="a" style="left:1829px;top:431px;width:27px;height:23px;background:#e1e1e1;border:1px solid #adadad;box-sizing:border-box"></div>
<div class="a t" style="left:1829.0px;top:434.5px;width:27px;text-align:center;font-size:14px;line-height:17px;color:#000;font-weight:400;">M</div>
<div class="a" style="left:1858px;top:431px;width:27px;height:23px;background:#e1e1e1;border:1px solid #adadad;box-sizing:border-box"></div>
<div class="a t" style="left:1858.0px;top:434.5px;width:27px;text-align:center;font-size:14px;line-height:17px;color:#000;font-weight:400;">Z</div>
<div class="a" style="left:1887px;top:431px;width:27px;height:23px;background:#d8d8d8;border:1px solid #c4c4c4;box-sizing:border-box"></div>
<svg class="a" style="left:1891px;top:434px;" width="19" height="16" viewBox="0 0 19 16"><rect x="0.5" y="0.5" width="18" height="15" fill="#b0b0b0" stroke="#999"/><rect x="3" y="3" width="13" height="10" fill="#d0d0d0"/><path d="M5 4 L14 12 M14 4 L5 12" stroke="#999" stroke-width="2.5"/></svg>
<div class="a" style="left:0px;top:467px;width:1185px;height:495px;background:#f0f0f0;border:1px solid #5a5a5a;box-sizing:border-box;box-shadow:inset 1px 1px 0 #fff"></div>
<div class="a" style="left:2px;top:495px;width:1159px;height:465px;background:#e6e6e6"></div>
<div class="a" style="left:3px;top:470px;width:45px;height:24px;background:linear-gradient(to bottom,#fcd7b4,#f4ede7)"></div>
<div class="a" style="left:48px;top:470px;width:1px;height:24px;background:#d8d8d8"></div>
<div class="a" style="left:49px;top:470px;width:2px;height:24px;background:#fdfefe"></div>
<div class="a" style="left:51px;top:470px;width:78px;height:24px;background:linear-gradient(to bottom,#fcd7b4,#f4ede7)"></div>
<div class="a" style="left:129px;top:470px;width:1px;height:24px;background:#d8d8d8"></div>
<div class="a" style="left:130px;top:470px;width:2px;height:24px;background:#fdfefe"></div>
<div class="a" style="left:132px;top:470px;width:105px;height:24px;background:linear-gradient(to bottom,#fcd7b4,#f4ede7)"></div>
<div class="a" style="left:237px;top:470px;width:1px;height:24px;background:#d8d8d8"></div>
<div class="a" style="left:238px;top:470px;width:2px;height:24px;background:#fdfefe"></div>
<div class="a" style="left:240px;top:470px;width:105px;height:24px;background:linear-gradient(to bottom,#fcd7b4,#f4ede7)"></div>
<div class="a" style="left:345px;top:470px;width:1px;height:24px;background:#d8d8d8"></div>
<div class="a" style="left:346px;top:470px;width:2px;height:24px;background:#fdfefe"></div>
<div class="a" style="left:348px;top:470px;width:58px;height:24px;background:linear-gradient(to bottom,#fcd7b4,#f4ede7)"></div>
<div class="a" style="left:406px;top:470px;width:1px;height:24px;background:#d8d8d8"></div>
<div class="a" style="left:407px;top:470px;width:2px;height:24px;background:#fdfefe"></div>
<div class="a" style="left:409px;top:470px;width:359px;height:24px;background:linear-gradient(to bottom,#fcd7b4,#f4ede7)"></div>
<div class="a" style="left:768px;top:470px;width:1px;height:24px;background:#d8d8d8"></div>
<div class="a" style="left:769px;top:470px;width:2px;height:24px;background:#fdfefe"></div>
<div class="a" style="left:771px;top:470px;width:105px;height:24px;background:linear-gradient(to bottom,#fcd7b4,#f4ede7)"></div>
<div class="a" style="left:876px;top:470px;width:1px;height:24px;background:#d8d8d8"></div>
<div class="a" style="left:877px;top:470px;width:2px;height:24px;background:#fdfefe"></div>
<div class="a" style="left:879px;top:470px;width:58px;height:24px;background:linear-gradient(to bottom,#fcd7b4,#f4ede7)"></div>
<div class="a" style="left:937px;top:470px;width:1px;height:24px;background:#d8d8d8"></div>
<div class="a" style="left:938px;top:470px;width:2px;height:24px;background:#fdfefe"></div>
<div class="a" style="left:940px;top:470px;width:159px;height:24px;background:linear-gradient(to bottom,#fcd7b4,#f4ede7)"></div>
<div class="a" style="left:1099px;top:470px;width:1px;height:24px;background:#d8d8d8"></div>
<div class="a" style="left:1100px;top:470px;width:2px;height:24px;background:#fdfefe"></div>
<div class="a" style="left:1102px;top:470px;width:58px;height:24px;background:linear-gradient(to bottom,#fcd7b4,#f4ede7)"></div>
<div class="a" style="left:1160px;top:470px;width:2px;height:24px;background:#fdfefe"></div>
<div class="a" style="left:2px;top:494px;width:1159px;height:1px;background:#d6d6d6"></div>
<div class="a" style="left:2px;top:495px;width:1159px;height:1px;background:#dde5e5"></div>
<div class="a" style="left:2px;top:468px;width:1159px;height:1px;background:#e4eef8"></div>
<div class="a" style="left:2px;top:469px;width:1159px;height:1px;background:#fff"></div>
<div class="a" style="left:20px;top:660px;width:1141px;height:55px;background:#8cdbfd"></div>
<div class="a" style="left:20px;top:770px;width:1141px;height:55px;background:#8cdbfd"></div>
<div class="a" style="left:20px;top:880px;width:1141px;height:55px;background:#8cdbfd"></div>
<div class="a" style="left:2px;top:550px;width:1159px;height:1px;background:#bdbdbd"></div>
<div class="a" style="left:2px;top:605px;width:1159px;height:1px;background:#bdbdbd"></div>
<div class="a" style="left:2px;top:660px;width:1159px;height:1px;background:#bdbdbd"></div>
<div class="a" style="left:2px;top:715px;width:1159px;height:1px;background:#bdbdbd"></div>
<div class="a" style="left:2px;top:770px;width:1159px;height:1px;background:#bdbdbd"></div>
<div class="a" style="left:2px;top:825px;width:1159px;height:1px;background:#bdbdbd"></div>
<div class="a" style="left:2px;top:880px;width:1159px;height:1px;background:#bdbdbd"></div>
<div class="a" style="left:2px;top:935px;width:1159px;height:1px;background:#bdbdbd"></div>
<div class="a" style="left:49px;top:495px;width:1px;height:465px;background:#bdbdbd"></div>
<div class="a" style="left:130px;top:495px;width:1px;height:465px;background:#bdbdbd"></div>
<div class="a" style="left:238px;top:495px;width:1px;height:465px;background:#bdbdbd"></div>
<div class="a" style="left:346px;top:495px;width:1px;height:465px;background:#bdbdbd"></div>
<div class="a" style="left:407px;top:495px;width:1px;height:465px;background:#bdbdbd"></div>
<div class="a" style="left:769px;top:495px;width:1px;height:465px;background:#bdbdbd"></div>
<div class="a" style="left:877px;top:495px;width:1px;height:465px;background:#bdbdbd"></div>
<div class="a" style="left:938px;top:495px;width:1px;height:465px;background:#bdbdbd"></div>
<div class="a" style="left:1100px;top:495px;width:1px;height:465px;background:#bdbdbd"></div>
<div class="a" style="left:20px;top:495px;width:1px;height:465px;background:#bdbdbd"></div>
<div class="a" style="left:2px;top:495px;width:18px;height:54px;background:linear-gradient(to bottom,#c4c4c4,#ececec);border-right:1px solid #f8f8f8;border-top:1px solid #f8f8f8;box-sizing:border-box"></div>
<div class="a" style="left:2px;top:550px;width:18px;height:54px;background:linear-gradient(to bottom,#c4c4c4,#ececec);border-right:1px solid #f8f8f8;border-top:1px solid #f8f8f8;box-sizing:border-box"></div>
<div class="a" style="left:2px;top:605px;width:18px;height:54px;background:linear-gradient(to bottom,#c4c4c4,#ececec);border-right:1px solid #f8f8f8;border-top:1px solid #f8f8f8;box-sizing:border-box"></div>
<div class="a" style="left:2px;top:660px;width:18px;height:54px;background:linear-gradient(to bottom,#c4c4c4,#ececec);border-right:1px solid #f8f8f8;border-top:1px solid #f8f8f8;box-sizing:border-box"></div>
<div class="a" style="left:2px;top:715px;width:18px;height:54px;background:linear-gradient(to bottom,#c4c4c4,#ececec);border-right:1px solid #f8f8f8;border-top:1px solid #f8f8f8;box-sizing:border-box"></div>
<div class="a" style="left:2px;top:770px;width:18px;height:54px;background:linear-gradient(to bottom,#c4c4c4,#ececec);border-right:1px solid #f8f8f8;border-top:1px solid #f8f8f8;box-sizing:border-box"></div>
<div class="a" style="left:2px;top:825px;width:18px;height:54px;background:linear-gradient(to bottom,#c4c4c4,#ececec);border-right:1px solid #f8f8f8;border-top:1px solid #f8f8f8;box-sizing:border-box"></div>
<div class="a" style="left:2px;top:880px;width:18px;height:54px;background:linear-gradient(to bottom,#c4c4c4,#ececec);border-right:1px solid #f8f8f8;border-top:1px solid #f8f8f8;box-sizing:border-box"></div>
<div class="a" style="left:2px;top:935px;width:18px;height:25px;background:linear-gradient(to bottom,#c4c4c4,#ececec);border-right:1px solid #f8f8f8;border-top:1px solid #f8f8f8;box-sizing:border-box"></div>
<div class="a t" style="left:7px;top:474.5px;font-size:13px;line-height:16px;color:#000;font-weight:400;">KZ</div>
<div class="a t" style="left:55px;top:474.5px;font-size:13px;line-height:16px;color:#000;font-weight:400;">Bericht-Nr.</div>
<div class="a t" style="left:136px;top:474.5px;font-size:13px;line-height:16px;color:#000;font-weight:400;">Datum</div>
<div class="a t" style="left:262px;top:474.5px;width:80px;text-align:right;font-size:13px;line-height:16px;color:#0000ff;font-weight:400;">Menge</div>
<div class="a t" style="left:352px;top:474.5px;font-size:13px;line-height:16px;color:#000;font-weight:400;">ME</div>
<div class="a t" style="left:412px;top:474.5px;font-size:13px;line-height:16px;color:#000;font-weight:400;">Leistungsbeschreibung</div>
<div class="a t" style="left:793px;top:474.5px;width:80px;text-align:right;font-size:13px;line-height:16px;color:#000;font-weight:400;">EP €</div>
<div class="a t" style="left:853px;top:474.5px;width:80px;text-align:right;font-size:13px;line-height:16px;color:#000;font-weight:400;">% [+/-]</div>
<div class="a t" style="left:1016px;top:474.5px;width:80px;text-align:right;font-size:13px;line-height:16px;color:#000;font-weight:400;">GP €</div>
<svg class="a" style="left:1117px;top:472px;" width="19" height="20" viewBox="0 0 19 20"><ellipse cx="5" cy="17.5" rx="3" ry="1" fill="#000" opacity="0.25"/><ellipse cx="14" cy="17.5" rx="3" ry="1" fill="#000" opacity="0.25"/><path d="M3.2 3.2 L15.8 15.8 M15.8 3.2 L3.2 15.8" stroke="#d81e34" stroke-width="4.2" stroke-linecap="butt"/><path d="M3.2 3.2 L15.8 15.8 M15.8 3.2 L3.2 15.8" stroke="#ee3a52" stroke-width="1.6" stroke-linecap="butt" opacity="0.6"/></svg>
<svg class="a" style="left:1148px;top:477px;" width="10" height="9" viewBox="0 0 10 9"><path d="M0.5 0.5 H9.5 L5 8 Z" fill="none" stroke="#b0b0b0" stroke-width="0.9"/></svg>
<div class="a t" style="left:136px;top:515.5px;font-size:13px;line-height:16px;color:#000;font-weight:400;">12.03.2015</div>
<div class="a t" style="left:263px;top:515.5px;width:80px;text-align:right;font-size:13px;line-height:16px;color:#000;font-weight:400;">5,500</div>
<div class="a t" style="left:351px;top:515.5px;font-size:13px;line-height:16px;color:#000;font-weight:400;">Std</div>
<div class="a t" style="left:412px;top:496.5px;font-size:13px;line-height:16px;color:#000;font-weight:400;">Polierstunden</div>
<div class="a t" style="left:793px;top:515.5px;width:80px;text-align:right;font-size:13px;line-height:16px;color:#000;font-weight:400;">35,00</div>
<div class="a t" style="left:1017px;top:515.5px;width:80px;text-align:right;font-size:13px;line-height:16px;color:#000;font-weight:400;">192,50</div>
<div class="a" style="left:236px;top:548px;width:113px;height:60px;border:3px solid #000080;box-sizing:border-box"></div>
<div class="a" style="left:248px;top:570px;width:95px;height:16px;background:#3399ff"></div>
<div class="a" style="left:248px;top:584px;width:63px;height:1px;background:#e8f2ff"></div>
<div class="a t" style="left:263px;top:570.5px;width:80px;text-align:right;font-size:13px;line-height:16px;color:#ffffff;font-weight:400;">5,000</div>
<div class="a" style="left:344px;top:570px;width:1px;height:16px;background:#000"></div>
<div class="a t" style="left:351px;top:570.5px;font-size:13px;line-height:16px;color:#0000ff;font-weight:400;">Sack</div>
<div class="a t" style="left:412px;top:551.5px;font-size:13px;line-height:16px;color:#0000ff;font-weight:400;">Zement</div>
<div class="a t" style="left:793px;top:570.5px;width:80px;text-align:right;font-size:13px;line-height:16px;color:#0000ff;font-weight:400;">15,00</div>
<div class="a t" style="left:1017px;top:570.5px;width:80px;text-align:right;font-size:13px;line-height:16px;color:#0000ff;font-weight:400;">75,00</div>
<svg class="a" style="left:4px;top:571px;" width="14" height="14" viewBox="0 0 14 14"><path d="M1 1 L4.5 4.5 L1 8 Z" fill="#0000ff"/><path d="M6.5 13 L7 10 L11 2.5 L13 3.5 L9 11 Z" fill="none" stroke="#0000ff" stroke-width="1" stroke-dasharray="1.5 0.8"/><path d="M2 13h1M4 13h1" stroke="#0000ff"/></svg>
<div class="a" style="left:1124px;top:516px;width:13px;height:13px;background:#fff;border:1px solid #333;box-sizing:border-box"></div>
<div class="a" style="left:1124px;top:571px;width:13px;height:13px;background:#fff;border:1px solid #333;box-sizing:border-box"></div>
<div class="a" style="left:1124px;top:626px;width:13px;height:13px;background:#fff;border:1px solid #333;box-sizing:border-box"></div>
<div class="a" style="left:1124px;top:681px;width:13px;height:13px;background:#fff;border:1px solid #333;box-sizing:border-box"></div>
<div class="a" style="left:1124px;top:736px;width:13px;height:13px;background:#fff;border:1px solid #333;box-sizing:border-box"></div>
<div class="a" style="left:1124px;top:791px;width:13px;height:13px;background:#fff;border:1px solid #333;box-sizing:border-box"></div>
<div class="a" style="left:1124px;top:846px;width:13px;height:13px;background:#fff;border:1px solid #333;box-sizing:border-box"></div>
<div class="a" style="left:1124px;top:901px;width:13px;height:13px;background:#fff;border:1px solid #333;box-sizing:border-box"></div>
<div class="a" style="left:1124px;top:956px;width:13px;height:4px;background:#fff;border:1px solid #333;border-bottom:none;box-sizing:border-box"></div>
<div class="a" style="left:1161px;top:470px;width:23px;height:490px;background:#f0f0f0"></div>
<svg class="a" style="left:1166.5px;top:476px;" width="11" height="7" viewBox="0 0 11 7"><path d="M1 6 L5.5 1 L10 6" fill="none" stroke="#505050" stroke-width="2"/></svg>
<div class="a" style="left:1163px;top:491px;width:19px;height:22px;background:#cdcdcd"></div>
<svg class="a" style="left:1167px;top:946px;" width="11" height="7" viewBox="0 0 11 7"><path d="M1 1 L5.5 6 L10 1" fill="none" stroke="#505050" stroke-width="2"/></svg>
<div class="a" style="left:1189px;top:466px;width:729px;height:497px;background:#f0f0f0;border-left:1px solid #fff;border-top:1px solid #fff;box-sizing:border-box"></div>
<div class="a" style="left:1190px;top:467px;width:727px;height:495px;background:#f0f0f0;border:1px solid #5a5a5a;box-sizing:border-box"></div>
<div class="a" style="left:1191px;top:959px;width:725px;height:2px;background:#fff"></div>
<div class="a" style="left:1191px;top:468px;width:290px;height:491px;background:#fff;border:1px solid #646464;box-sizing:border-box"></div>
<div class="a" style="left:1486px;top:467px;width:431px;height:492px;background:#f0f0f0;border:1px solid #5a5a5a;border-left:2px solid #5a5a5a;border-top:2px solid #5a5a5a;box-sizing:border-box;box-shadow:inset 1px 1px 0 #fff"></div>
<div class="a" style="left:1489px;top:495px;width:404px;height:462px;background:#f4f4f4"></div>
<div class="a" style="left:1488px;top:469px;width:405px;height:2px;background:#fbfdff"></div>
<div class="a" style="left:1489px;top:471px;width:120px;height:24px;background:linear-gradient(to bottom,#fcd7b4,#f4ede7)"></div>
<div class="a" style="left:1609px;top:471px;width:1px;height:24px;background:#d8d8d8"></div>
<div class="a" style="left:1610px;top:471px;width:2px;height:24px;background:#fdfefe"></div>
<div class="a" style="left:1612px;top:471px;width:195px;height:24px;background:linear-gradient(to bottom,#fcd7b4,#f4ede7)"></div>
<div class="a" style="left:1807px;top:471px;width:1px;height:24px;background:#d8d8d8"></div>
<div class="a" style="left:1808px;top:471px;width:2px;height:24px;background:#fdfefe"></div>
<div class="a" style="left:1810px;top:471px;width:28px;height:24px;background:linear-gradient(to bottom,#fcd7b4,#f4ede7)"></div>
<div class="a" style="left:1838px;top:471px;width:1px;height:24px;background:#d8d8d8"></div>
<div class="a" style="left:1839px;top:471px;width:2px;height:24px;background:#fdfefe"></div>
<div class="a" style="left:1841px;top:471px;width:52px;height:24px;background:linear-gradient(to bottom,#fcd7b4,#f4ede7)"></div>
<div class="a" style="left:1489px;top:495px;width:404px;height:1px;background:#d8dcdc"></div>
<div class="a t" style="left:1493px;top:475.5px;font-size:13px;line-height:16px;color:#000;font-weight:400;">OZ</div>
<div class="a t" style="left:1616px;top:475.5px;font-size:13px;line-height:16px;color:#000;font-weight:400;">Kurztext</div>
<div class="a t" style="left:1814px;top:475.5px;font-size:13px;line-height:16px;color:#000;font-weight:400;">M</div>
<div class="a t" style="left:1828px;top:475.5px;width:60px;text-align:right;font-size:13px;line-height:16px;color:#000;font-weight:400;">EP €</div>
<div class="a" style="left:1506px;top:496px;width:387px;height:20px;background:#e4e4e4"></div>
<div class="a" style="left:1489px;top:496px;width:17px;height:20px;background:linear-gradient(to bottom,#c8c8c8,#ececec);border-top:1px solid #f8f8f8;border-right:1px solid #f8f8f8;box-sizing:border-box"></div>
<div class="a t" style="left:1511px;top:497.5px;font-size:13px;line-height:16px;color:#0000ff;font-weight:400;">00.010</div>
<div class="a t" style="left:1615px;top:497.5px;font-size:13px;line-height:16px;color:#0000ff;font-weight:400;white-space:normal;width:188px;height:16px;overflow:hidden;text-align:justify;text-align-last:justify">Geraete, Werkzeuge und son<span style="letter-spacing:-1.6px">...</span></div>
<div class="a t" style="left:1814px;top:497.5px;font-size:13px;line-height:16px;color:#0000ff;font-weight:400;">%</div>
<div class="a t" style="left:1831px;top:497.5px;width:60px;text-align:right;font-size:13px;line-height:16px;color:#0000ff;font-weight:400;">492,00</div>
<div class="a" style="left:1506px;top:516px;width:387px;height:1px;background:repeating-linear-gradient(to right,#c4c4c4 0 1px,transparent 1px 3px)"></div>
<div class="a" style="left:1489px;top:516px;width:17px;height:20px;background:linear-gradient(to bottom,#c8c8c8,#ececec);border-top:1px solid #f8f8f8;border-right:1px solid #f8f8f8;box-sizing:border-box"></div>
<div class="a t" style="left:1511px;top:517.5px;font-size:13px;line-height:16px;color:#10107a;font-weight:400;">00.020</div>
<div class="a t" style="left:1615px;top:517.5px;font-size:13px;line-height:16px;color:#10107a;font-weight:400;white-space:nowrap">Stuben roden, D=30-50 cm</div>
<div class="a t" style="left:1814px;top:517.5px;font-size:13px;line-height:16px;color:#10107a;font-weight:400;">m2</div>
<div class="a t" style="left:1831px;top:517.5px;width:60px;text-align:right;font-size:13px;line-height:16px;color:#10107a;font-weight:400;">40,00</div>
<div class="a" style="left:1506px;top:536px;width:387px;height:1px;background:repeating-linear-gradient(to right,#c4c4c4 0 1px,transparent 1px 3px)"></div>
<div class="a" style="left:1489px;top:536px;width:17px;height:20px;background:linear-gradient(to bottom,#c8c8c8,#ececec);border-top:1px solid #f8f8f8;border-right:1px solid #f8f8f8;box-sizing:border-box"></div>
<div class="a t" style="left:1511px;top:537.5px;font-size:13px;line-height:16px;color:#10107a;font-weight:400;">00.030</div>
<div class="a t" style="left:1615px;top:537.5px;font-size:13px;line-height:16px;color:#10107a;font-weight:400;white-space:nowrap">Bauliche Anlage abbrechen</div>
<div class="a t" style="left:1814px;top:537.5px;font-size:13px;line-height:16px;color:#10107a;font-weight:400;">St<span style="letter-spacing:-1.6px">...</span></div>
<div class="a t" style="left:1831px;top:537.5px;width:60px;text-align:right;font-size:13px;line-height:16px;color:#10107a;font-weight:400;">1.301,<span style="letter-spacing:-1.6px">...</span></div>
<div class="a" style="left:1506px;top:556px;width:387px;height:1px;background:repeating-linear-gradient(to right,#c4c4c4 0 1px,transparent 1px 3px)"></div>
<div class="a" style="left:1489px;top:556px;width:17px;height:20px;background:linear-gradient(to bottom,#c8c8c8,#ececec);border-top:1px solid #f8f8f8;border-right:1px solid #f8f8f8;box-sizing:border-box"></div>
<div class="a t" style="left:1511px;top:557.5px;font-size:13px;line-height:16px;color:#10107a;font-weight:400;">01.001</div>
<div class="a t" style="left:1615px;top:557.5px;font-size:13px;line-height:16px;color:#10107a;font-weight:400;white-space:nowrap">Verkehrssicherung einrichten</div>
<div class="a t" style="left:1814px;top:557.5px;font-size:13px;line-height:16px;color:#10107a;font-weight:400;">ps<span style="letter-spacing:-1.6px">...</span></div>
<div class="a t" style="left:1831px;top:557.5px;width:60px;text-align:right;font-size:13px;line-height:16px;color:#10107a;font-weight:400;">1.512,<span style="letter-spacing:-1.6px">...</span></div>
<div class="a" style="left:1506px;top:576px;width:387px;height:1px;background:repeating-linear-gradient(to right,#c4c4c4 0 1px,transparent 1px 3px)"></div>
<div class="a" style="left:1489px;top:576px;width:17px;height:20px;background:linear-gradient(to bottom,#c8c8c8,#ececec);border-top:1px solid #f8f8f8;border-right:1px solid #f8f8f8;box-sizing:border-box"></div>
<div class="a t" style="left:1511px;top:577.5px;font-size:13px;line-height:16px;color:#10107a;font-weight:400;">01.003</div>
<div class="a t" style="left:1615px;top:577.5px;font-size:13px;line-height:16px;color:#10107a;font-weight:400;white-space:nowrap">Verkehrssicherung betreiben</div>
<div class="a t" style="left:1814px;top:577.5px;font-size:13px;line-height:16px;color:#10107a;font-weight:400;">St<span style="letter-spacing:-1.6px">...</span></div>
<div class="a t" style="left:1831px;top:577.5px;width:60px;text-align:right;font-size:13px;line-height:16px;color:#10107a;font-weight:400;">1.890,<span style="letter-spacing:-1.6px">...</span></div>
<div class="a" style="left:1506px;top:596px;width:387px;height:1px;background:repeating-linear-gradient(to right,#c4c4c4 0 1px,transparent 1px 3px)"></div>
<div class="a" style="left:1489px;top:596px;width:17px;height:20px;background:linear-gradient(to bottom,#c8c8c8,#ececec);border-top:1px solid #f8f8f8;border-right:1px solid #f8f8f8;box-sizing:border-box"></div>
<div class="a t" style="left:1511px;top:597.5px;font-size:13px;line-height:16px;color:#10107a;font-weight:400;">01.005</div>
<div class="a t" style="left:1615px;top:597.5px;font-size:13px;line-height:16px;color:#10107a;font-weight:400;white-space:nowrap">Verkehrsschilder abkleben</div>
<div class="a t" style="left:1814px;top:597.5px;font-size:13px;line-height:16px;color:#10107a;font-weight:400;">St</div>
<div class="a t" style="left:1831px;top:597.5px;width:60px;text-align:right;font-size:13px;line-height:16px;color:#10107a;font-weight:400;">2.536,<span style="letter-spacing:-1.6px">...</span></div>
<div class="a" style="left:1506px;top:616px;width:387px;height:1px;background:repeating-linear-gradient(to right,#c4c4c4 0 1px,transparent 1px 3px)"></div>
<div class="a" style="left:1489px;top:616px;width:17px;height:20px;background:linear-gradient(to bottom,#c8c8c8,#ececec);border-top:1px solid #f8f8f8;border-right:1px solid #f8f8f8;box-sizing:border-box"></div>
<div class="a t" style="left:1511px;top:617.5px;font-size:13px;line-height:16px;color:#10107a;font-weight:400;">01.006</div>
<div class="a t" style="left:1615px;top:617.5px;font-size:13px;line-height:16px;color:#10107a;font-weight:400;white-space:nowrap">Verkehrsschilder abkleben</div>
<div class="a t" style="left:1814px;top:617.5px;font-size:13px;line-height:16px;color:#10107a;font-weight:400;">St</div>
<div class="a t" style="left:1831px;top:617.5px;width:60px;text-align:right;font-size:13px;line-height:16px;color:#10107a;font-weight:400;">106,51</div>
<div class="a" style="left:1506px;top:636px;width:387px;height:1px;background:repeating-linear-gradient(to right,#c4c4c4 0 1px,transparent 1px 3px)"></div>
<div class="a" style="left:1489px;top:636px;width:17px;height:20px;background:linear-gradient(to bottom,#c8c8c8,#ececec);border-top:1px solid #f8f8f8;border-right:1px solid #f8f8f8;box-sizing:border-box"></div>
<div class="a t" style="left:1511px;top:637.5px;font-size:13px;line-height:16px;color:#10107a;font-weight:400;">02.001</div>
<div class="a t" style="left:1615px;top:637.5px;font-size:13px;line-height:16px;color:#10107a;font-weight:400;white-space:normal;width:188px;height:16px;overflow:hidden;text-align:justify;text-align-last:justify">Oberboden abtragen und lage<span style="letter-spacing:-1.6px">...</span></div>
<div class="a t" style="left:1814px;top:637.5px;font-size:13px;line-height:16px;color:#10107a;font-weight:400;">m3</div>
<div class="a t" style="left:1831px;top:637.5px;width:60px;text-align:right;font-size:13px;line-height:16px;color:#10107a;font-weight:400;">106,51</div>
<div class="a" style="left:1506px;top:656px;width:387px;height:1px;background:repeating-linear-gradient(to right,#c4c4c4 0 1px,transparent 1px 3px)"></div>
<div class="a" style="left:1489px;top:656px;width:17px;height:20px;background:linear-gradient(to bottom,#c8c8c8,#ececec);border-top:1px solid #f8f8f8;border-right:1px solid #f8f8f8;box-sizing:border-box"></div>
<div class="a t" style="left:1511px;top:657.5px;font-size:13px;line-height:16px;color:#10107a;font-weight:400;">02.002</div>
<div class="a t" style="left:1615px;top:657.5px;font-size:13px;line-height:16px;color:#10107a;font-weight:400;white-space:normal;width:188px;height:16px;overflow:hidden;text-align:justify;text-align-last:justify">Oberboden, gelagert, andeck<span style="letter-spacing:-1.6px">...</span></div>
<div class="a t" style="left:1814px;top:657.5px;font-size:13px;line-height:16px;color:#10107a;font-weight:400;">m3</div>
<div class="a t" style="left:1831px;top:657.5px;width:60px;text-align:right;font-size:13px;line-height:16px;color:#10107a;font-weight:400;">714,00</div>
<div class="a" style="left:1506px;top:676px;width:387px;height:1px;background:repeating-linear-gradient(to right,#c4c4c4 0 1px,transparent 1px 3px)"></div>
<div class="a" style="left:1489px;top:676px;width:17px;height:20px;background:linear-gradient(to bottom,#c8c8c8,#ececec);border-top:1px solid #f8f8f8;border-right:1px solid #f8f8f8;box-sizing:border-box"></div>
<div class="a t" style="left:1511px;top:677.5px;font-size:13px;line-height:16px;color:#10107a;font-weight:400;">02.003</div>
<div class="a t" style="left:1615px;top:677.5px;font-size:13px;line-height:16px;color:#10107a;font-weight:400;white-space:normal;width:188px;height:16px;overflow:hidden;text-align:justify;text-align-last:justify">Oberboden, gelagert, andeck<span style="letter-spacing:-1.6px">...</span></div>
<div class="a t" style="left:1814px;top:677.5px;font-size:13px;line-height:16px;color:#10107a;font-weight:400;">m3</div>
<div class="a t" style="left:1831px;top:677.5px;width:60px;text-align:right;font-size:13px;line-height:16px;color:#10107a;font-weight:400;">714,00</div>
<div class="a" style="left:1506px;top:696px;width:387px;height:1px;background:repeating-linear-gradient(to right,#c4c4c4 0 1px,transparent 1px 3px)"></div>
<div class="a" style="left:1489px;top:696px;width:17px;height:20px;background:linear-gradient(to bottom,#c8c8c8,#ececec);border-top:1px solid #f8f8f8;border-right:1px solid #f8f8f8;box-sizing:border-box"></div>
<div class="a t" style="left:1511px;top:697.5px;font-size:13px;line-height:16px;color:#10107a;font-weight:400;">03.001</div>
<div class="a t" style="left:1615px;top:697.5px;font-size:13px;line-height:16px;color:#10107a;font-weight:400;white-space:nowrap">Verkehrssicherung einrichten</div>
<div class="a t" style="left:1814px;top:697.5px;font-size:13px;line-height:16px;color:#10107a;font-weight:400;">St<span style="letter-spacing:-1.6px">...</span></div>
<div class="a t" style="left:1831px;top:697.5px;width:60px;text-align:right;font-size:13px;line-height:16px;color:#10107a;font-weight:400;">106,51</div>
<div class="a" style="left:1506px;top:716px;width:387px;height:1px;background:repeating-linear-gradient(to right,#c4c4c4 0 1px,transparent 1px 3px)"></div>
<div class="a" style="left:1489px;top:716px;width:17px;height:20px;background:linear-gradient(to bottom,#c8c8c8,#ececec);border-top:1px solid #f8f8f8;border-right:1px solid #f8f8f8;box-sizing:border-box"></div>
<div class="a t" style="left:1511px;top:717.5px;font-size:13px;line-height:16px;color:#10107a;font-weight:400;">03.002</div>
<div class="a t" style="left:1615px;top:717.5px;font-size:13px;line-height:16px;color:#10107a;font-weight:400;white-space:nowrap">Verkehrssicherung einrichten</div>
<div class="a t" style="left:1814px;top:717.5px;font-size:13px;line-height:16px;color:#10107a;font-weight:400;">St<span style="letter-spacing:-1.6px">...</span></div>
<div class="a t" style="left:1831px;top:717.5px;width:60px;text-align:right;font-size:13px;line-height:16px;color:#10107a;font-weight:400;">172,07</div>
<div class="a" style="left:1506px;top:736px;width:387px;height:1px;background:repeating-linear-gradient(to right,#c4c4c4 0 1px,transparent 1px 3px)"></div>
<div class="a" style="left:1489px;top:736px;width:17px;height:20px;background:linear-gradient(to bottom,#c8c8c8,#ececec);border-top:1px solid #f8f8f8;border-right:1px solid #f8f8f8;box-sizing:border-box"></div>
<div class="a t" style="left:1511px;top:737.5px;font-size:13px;line-height:16px;color:#10107a;font-weight:400;">03.003</div>
<div class="a t" style="left:1615px;top:737.5px;font-size:13px;line-height:16px;color:#10107a;font-weight:400;white-space:nowrap">Verkehrssicherung einrichten</div>
<div class="a t" style="left:1814px;top:737.5px;font-size:13px;line-height:16px;color:#10107a;font-weight:400;">St<span style="letter-spacing:-1.6px">...</span></div>
<div class="a t" style="left:1831px;top:737.5px;width:60px;text-align:right;font-size:13px;line-height:16px;color:#10107a;font-weight:400;">0,00</div>
<div class="a" style="left:1506px;top:756px;width:387px;height:1px;background:repeating-linear-gradient(to right,#c4c4c4 0 1px,transparent 1px 3px)"></div>
<div class="a" style="left:1489px;top:756px;width:17px;height:20px;background:linear-gradient(to bottom,#c8c8c8,#ececec);border-top:1px solid #f8f8f8;border-right:1px solid #f8f8f8;box-sizing:border-box"></div>
<div class="a t" style="left:1511px;top:757.5px;font-size:13px;line-height:16px;color:#10107a;font-weight:400;">03.004</div>
<div class="a t" style="left:1615px;top:757.5px;font-size:13px;line-height:16px;color:#10107a;font-weight:400;white-space:nowrap">Verkehrssicherung betreiben</div>
<div class="a t" style="left:1814px;top:757.5px;font-size:13px;line-height:16px;color:#10107a;font-weight:400;">St<span style="letter-spacing:-1.6px">...</span></div>
<div class="a t" style="left:1831px;top:757.5px;width:60px;text-align:right;font-size:13px;line-height:16px;color:#10107a;font-weight:400;">0,00</div>
<div class="a" style="left:1506px;top:776px;width:387px;height:1px;background:repeating-linear-gradient(to right,#c4c4c4 0 1px,transparent 1px 3px)"></div>
<div class="a" style="left:1489px;top:776px;width:17px;height:20px;background:linear-gradient(to bottom,#c8c8c8,#ececec);border-top:1px solid #f8f8f8;border-right:1px solid #f8f8f8;box-sizing:border-box"></div>
<div class="a t" style="left:1511px;top:777.5px;font-size:13px;line-height:16px;color:#10107a;font-weight:400;">03.005</div>
<div class="a t" style="left:1615px;top:777.5px;font-size:13px;line-height:16px;color:#10107a;font-weight:400;white-space:normal;width:188px;height:16px;overflow:hidden;text-align:justify;text-align-last:justify">AfB mit 280 kg liefern und ein<span style="letter-spacing:-1.6px">...</span></div>
<div class="a t" style="left:1814px;top:777.5px;font-size:13px;line-height:16px;color:#10107a;font-weight:400;">m2</div>
<div class="a t" style="left:1831px;top:777.5px;width:60px;text-align:right;font-size:13px;line-height:16px;color:#10107a;font-weight:400;">0,00</div>
<div class="a" style="left:1506px;top:796px;width:387px;height:1px;background:repeating-linear-gradient(to right,#c4c4c4 0 1px,transparent 1px 3px)"></div>
<div class="a" style="left:1489px;top:796px;width:17px;height:20px;background:linear-gradient(to bottom,#c8c8c8,#ececec);border-top:1px solid #f8f8f8;border-right:1px solid #f8f8f8;box-sizing:border-box"></div>
<div class="a t" style="left:1511px;top:797.5px;font-size:13px;line-height:16px;color:#10107a;font-weight:400;">03.006</div>
<div class="a t" style="left:1615px;top:797.5px;font-size:13px;line-height:16px;color:#10107a;font-weight:400;white-space:nowrap">Baken umstellen</div>
<div class="a t" style="left:1814px;top:797.5px;font-size:13px;line-height:16px;color:#10107a;font-weight:400;">St</div>
<div class="a t" style="left:1831px;top:797.5px;width:60px;text-align:right;font-size:13px;line-height:16px;color:#10107a;font-weight:400;">0,00</div>
<div class="a" style="left:1506px;top:816px;width:387px;height:1px;background:repeating-linear-gradient(to right,#c4c4c4 0 1px,transparent 1px 3px)"></div>
<div class="a" style="left:1489px;top:816px;width:17px;height:20px;background:linear-gradient(to bottom,#c8c8c8,#ececec);border-top:1px solid #f8f8f8;border-right:1px solid #f8f8f8;box-sizing:border-box"></div>
<div class="a t" style="left:1511px;top:817.5px;font-size:13px;line-height:16px;color:#10107a;font-weight:400;">03.007</div>
<div class="a t" style="left:1615px;top:817.5px;font-size:13px;line-height:16px;color:#10107a;font-weight:400;white-space:normal;width:188px;height:16px;overflow:hidden;text-align:justify;text-align-last:justify">Oberboden abtragen und lage<span style="letter-spacing:-1.6px">...</span></div>
<div class="a t" style="left:1814px;top:817.5px;font-size:13px;line-height:16px;color:#10107a;font-weight:400;">m3</div>
<div class="a t" style="left:1831px;top:817.5px;width:60px;text-align:right;font-size:13px;line-height:16px;color:#10107a;font-weight:400;">400,00</div>
<div class="a" style="left:1506px;top:836px;width:387px;height:1px;background:repeating-linear-gradient(to right,#c4c4c4 0 1px,transparent 1px 3px)"></div>
<div class="a" style="left:1489px;top:836px;width:17px;height:20px;background:linear-gradient(to bottom,#c8c8c8,#ececec);border-top:1px solid #f8f8f8;border-right:1px solid #f8f8f8;box-sizing:border-box"></div>
<div class="a t" style="left:1511px;top:837.5px;font-size:13px;line-height:16px;color:#10107a;font-weight:400;">03.008</div>
<div class="a t" style="left:1615px;top:837.5px;font-size:13px;line-height:16px;color:#10107a;font-weight:400;white-space:nowrap">Fertigstellungpflege</div>
<div class="a t" style="left:1814px;top:837.5px;font-size:13px;line-height:16px;color:#10107a;font-weight:400;">m2</div>
<div class="a t" style="left:1831px;top:837.5px;width:60px;text-align:right;font-size:13px;line-height:16px;color:#10107a;font-weight:400;">0,00</div>
<div class="a" style="left:1506px;top:856px;width:387px;height:1px;background:repeating-linear-gradient(to right,#c4c4c4 0 1px,transparent 1px 3px)"></div>
<div class="a" style="left:1489px;top:856px;width:17px;height:20px;background:linear-gradient(to bottom,#c8c8c8,#ececec);border-top:1px solid #f8f8f8;border-right:1px solid #f8f8f8;box-sizing:border-box"></div>
<div class="a t" style="left:1511px;top:857.5px;font-size:13px;line-height:16px;color:#10107a;font-weight:400;">03.009</div>
<div class="a t" style="left:1615px;top:857.5px;font-size:13px;line-height:16px;color:#10107a;font-weight:400;white-space:nowrap">Fertigstellungpflege</div>
<div class="a t" style="left:1814px;top:857.5px;font-size:13px;line-height:16px;color:#10107a;font-weight:400;">m2</div>
<div class="a t" style="left:1831px;top:857.5px;width:60px;text-align:right;font-size:13px;line-height:16px;color:#10107a;font-weight:400;">0,00</div>
<div class="a" style="left:1506px;top:876px;width:387px;height:1px;background:repeating-linear-gradient(to right,#c4c4c4 0 1px,transparent 1px 3px)"></div>
<div class="a" style="left:1489px;top:876px;width:17px;height:20px;background:linear-gradient(to bottom,#c8c8c8,#ececec);border-top:1px solid #f8f8f8;border-right:1px solid #f8f8f8;box-sizing:border-box"></div>
<div class="a t" style="left:1511px;top:877.5px;font-size:13px;line-height:16px;color:#10107a;font-weight:400;">03.010</div>
<div class="a t" style="left:1615px;top:877.5px;font-size:13px;line-height:16px;color:#10107a;font-weight:400;white-space:nowrap">Fertigstellungpflege</div>
<div class="a t" style="left:1814px;top:877.5px;font-size:13px;line-height:16px;color:#10107a;font-weight:400;">m2</div>
<div class="a t" style="left:1831px;top:877.5px;width:60px;text-align:right;font-size:13px;line-height:16px;color:#10107a;font-weight:400;">0,00</div>
<div class="a" style="left:1506px;top:896px;width:387px;height:1px;background:repeating-linear-gradient(to right,#c4c4c4 0 1px,transparent 1px 3px)"></div>
<div class="a" style="left:1489px;top:896px;width:17px;height:20px;background:linear-gradient(to bottom,#c8c8c8,#ececec);border-top:1px solid #f8f8f8;border-right:1px solid #f8f8f8;box-sizing:border-box"></div>
<div class="a t" style="left:1511px;top:897.5px;font-size:13px;line-height:16px;color:#10107a;font-weight:400;">07.001</div>
<div class="a t" style="left:1615px;top:897.5px;font-size:13px;line-height:16px;color:#10107a;font-weight:400;white-space:normal;width:188px;height:16px;overflow:hidden;text-align:justify;text-align-last:justify">Leitungsgraben Kl. 3-6 T=1,2<span style="letter-spacing:-1.6px">...</span></div>
<div class="a t" style="left:1814px;top:897.5px;font-size:13px;line-height:16px;color:#10107a;font-weight:400;">m3</div>
<div class="a t" style="left:1831px;top:897.5px;width:60px;text-align:right;font-size:13px;line-height:16px;color:#10107a;font-weight:400;">75,60</div>
<div class="a" style="left:1506px;top:916px;width:387px;height:1px;background:repeating-linear-gradient(to right,#c4c4c4 0 1px,transparent 1px 3px)"></div>
<div class="a" style="left:1489px;top:916px;width:17px;height:20px;background:linear-gradient(to bottom,#c8c8c8,#ececec);border-top:1px solid #f8f8f8;border-right:1px solid #f8f8f8;box-sizing:border-box"></div>
<div class="a t" style="left:1511px;top:917.5px;font-size:13px;line-height:16px;color:#10107a;font-weight:400;">07.002</div>
<div class="a t" style="left:1615px;top:917.5px;font-size:13px;line-height:16px;color:#10107a;font-weight:400;white-space:nowrap">Index = 1</div>
<div class="a t" style="left:1814px;top:917.5px;font-size:13px;line-height:16px;color:#10107a;font-weight:400;">m</div>
<div class="a t" style="left:1831px;top:917.5px;width:60px;text-align:right;font-size:13px;line-height:16px;color:#10107a;font-weight:400;">0,00</div>
<div class="a" style="left:1506px;top:936px;width:387px;height:1px;background:repeating-linear-gradient(to right,#c4c4c4 0 1px,transparent 1px 3px)"></div>
<div class="a" style="left:1489px;top:936px;width:17px;height:20px;background:linear-gradient(to bottom,#c8c8c8,#ececec);border-top:1px solid #f8f8f8;border-right:1px solid #f8f8f8;box-sizing:border-box"></div>
<div class="a t" style="left:1511px;top:937.5px;font-size:13px;line-height:16px;color:#10107a;font-weight:400;">07.003</div>
<div class="a t" style="left:1615px;top:937.5px;font-size:13px;line-height:16px;color:#10107a;font-weight:400;white-space:normal;width:188px;height:16px;overflow:hidden;text-align:justify;text-align-last:justify">Boden liefern,in Leitungsgrab.<span style="letter-spacing:-1.6px">...</span></div>
<div class="a t" style="left:1814px;top:937.5px;font-size:13px;line-height:16px;color:#10107a;font-weight:400;">m3</div>
<div class="a t" style="left:1831px;top:937.5px;width:60px;text-align:right;font-size:13px;line-height:16px;color:#10107a;font-weight:400;">90,72</div>
<div class="a" style="left:1506px;top:956px;width:387px;height:1px;background:repeating-linear-gradient(to right,#c4c4c4 0 1px,transparent 1px 3px)"></div>
<div class="a" style="left:1489px;top:956px;width:17px;height:2px;background:#c8c8c8"></div>
<svg class="a" style="left:1496px;top:503px;" width="6" height="10" viewBox="0 0 6 10"><path d="M0 0 L5 5 L0 10 Z" fill="#000"/></svg>
<div class="a" style="left:1506px;top:496px;width:1px;height:462px;background:repeating-linear-gradient(to bottom,#c4c4c4 0 1px,transparent 1px 3px)"></div>
<div class="a" style="left:1610px;top:496px;width:1px;height:462px;background:repeating-linear-gradient(to bottom,#c4c4c4 0 1px,transparent 1px 3px)"></div>
<div class="a" style="left:1808px;top:496px;width:1px;height:462px;background:repeating-linear-gradient(to bottom,#c4c4c4 0 1px,transparent 1px 3px)"></div>
<div class="a" style="left:1839px;top:496px;width:1px;height:462px;background:repeating-linear-gradient(to bottom,#c4c4c4 0 1px,transparent 1px 3px)"></div>
<div class="a" style="left:1893px;top:470px;width:23px;height:488px;background:#f0f0f0"></div>
<svg class="a" style="left:1899px;top:477px;" width="11" height="7" viewBox="0 0 11 7"><path d="M1 6 L5.5 1 L10 6" fill="none" stroke="#505050" stroke-width="2"/></svg>
<div class="a" style="left:1896px;top:491px;width:18px;height:350px;background:#cdcdcd"></div>
<svg class="a" style="left:1899.5px;top:943px;" width="11" height="7" viewBox="0 0 11 7"><path d="M1 1 L5.5 6 L10 1" fill="none" stroke="#505050" stroke-width="2"/></svg>
<div class="a" style="left:661px;top:968px;width:131px;height:23px;background:#cccccc;border:1px solid #c4c4c4;box-sizing:border-box"></div>
<div class="a t" style="left:661.0px;top:971.5px;width:131px;text-align:center;font-size:13px;line-height:16px;color:#6d6d6d;font-weight:400;">F2: Bericht</div>
<div class="a" style="left:794px;top:968px;width:131px;height:23px;background:#cccccc;border:1px solid #c4c4c4;box-sizing:border-box"></div>
<div class="a t" style="left:794.0px;top:971.5px;width:131px;text-align:center;font-size:13px;line-height:16px;color:#6d6d6d;font-weight:400;">F3: Neu</div>
<div class="a" style="left:926px;top:968px;width:131px;height:23px;background:#cccccc;border:1px solid #c4c4c4;box-sizing:border-box"></div>
<div class="a t" style="left:926.0px;top:971.5px;width:131px;text-align:center;font-size:13px;line-height:16px;color:#6d6d6d;font-weight:400;">F4: Kopieren</div>
<div class="a" style="left:1059px;top:968px;width:131px;height:23px;background:#cccccc;border:1px solid #c4c4c4;box-sizing:border-box"></div>
<div class="a t" style="left:1059.5px;top:972.5px;width:131px;text-align:center;font-size:13px;line-height:16px;color:#ffffff;font-weight:400;">F5: Rechnung +</div>
<div class="a t" style="left:1059.0px;top:971.5px;width:131px;text-align:center;font-size:13px;line-height:16px;color:#b4b4b4;font-weight:400;">F5: Rechnung +</div>
<div class="a" style="left:1192px;top:968px;width:131px;height:23px;background:#cccccc;border:1px solid #c4c4c4;box-sizing:border-box"></div>
<div class="a t" style="left:1192.5px;top:972.5px;width:131px;text-align:center;font-size:13px;line-height:16px;color:#ffffff;font-weight:400;">F6: Rechnung -</div>
<div class="a t" style="left:1192.0px;top:971.5px;width:131px;text-align:center;font-size:13px;line-height:16px;color:#b4b4b4;font-weight:400;">F6: Rechnung -</div>
<div class="a" style="left:1326px;top:968px;width:158px;height:23px;background:#c0c0c0;border:1px solid #d4d4d4;box-shadow:inset 0 0 0 2px #c4c4c4, inset 0 0 0 3px #e0e0e0;box-sizing:border-box"></div>
<div class="a t" style="left:1326.0px;top:971.5px;width:158px;text-align:center;font-size:13px;line-height:16px;color:#000;font-weight:400;">F7: Zurück</div>
<div class="a" style="left:1486px;top:968px;width:158px;height:23px;background:#c0c0c0;border:1px solid #d4d4d4;box-shadow:inset 0 0 0 2px #c4c4c4, inset 0 0 0 3px #e0e0e0;box-sizing:border-box"></div>
<div class="a t" style="left:1486.0px;top:971.5px;width:158px;text-align:center;font-size:13px;line-height:16px;color:#000;font-weight:400;">F8: OK</div>
<div class="a" style="left:1646px;top:968px;width:131px;height:23px;background:#cccccc;border:1px solid #c4c4c4;box-sizing:border-box"></div>
<div class="a t" style="left:1646.5px;top:972.5px;width:131px;text-align:center;font-size:13px;line-height:16px;color:#ffffff;font-weight:400;">F11: -->Drucken</div>
<div class="a t" style="left:1646.0px;top:971.5px;width:131px;text-align:center;font-size:13px;line-height:16px;color:#b4b4b4;font-weight:400;">F11: -->Drucken</div>
<div class="a" style="left:1779px;top:968px;width:131px;height:23px;background:#cccccc;border:1px solid #c4c4c4;box-sizing:border-box"></div>
<div class="a" style="left:1782px;top:971px;width:125px;height:17px;background:#ff7e7e"></div>
<div class="a t" style="left:1779.0px;top:971.5px;width:131px;text-align:center;font-size:13px;line-height:16px;color:#1a0000;font-weight:400;">F12: -->Löschen</div>
<div class="a" style="left:0px;top:998px;width:1920px;height:4px;background:#bebebe"></div>
<div class="a" style="left:0px;top:1002px;width:1920px;height:1px;background:#6e6e6e"></div>
<div class="a" style="left:1px;top:1002px;width:1px;height:23px;background:#6e6e6e"></div>
<div class="a" style="left:2px;top:1003px;width:1918px;height:22px;background:#c0c0c0"></div>
<div class="a" style="left:0px;top:1025px;width:1920px;height:2px;background:#f8f8f8"></div>
<div class="a" style="left:0px;top:1027px;width:1920px;height:2px;background:#e4e4e4"></div>
<div class="a" style="left:0px;top:1029px;width:1920px;height:3px;background:#000"></div>
<div class="a" style="left:409px;top:1029px;width:142px;height:3px;background:#3a3a3a"></div>
<div class="a" style="left:613px;top:1029px;width:116px;height:3px;background:#2b5a2b"></div>
<div class="a" style="left:729px;top:1029px;width:16px;height:3px;background:#303030"></div>
<div class="a t" style="left:4.5px;top:1006.5px;font-size:14px;line-height:17px;color:#1a4596;font-weight:400;">Menge</div>
</body></html>
